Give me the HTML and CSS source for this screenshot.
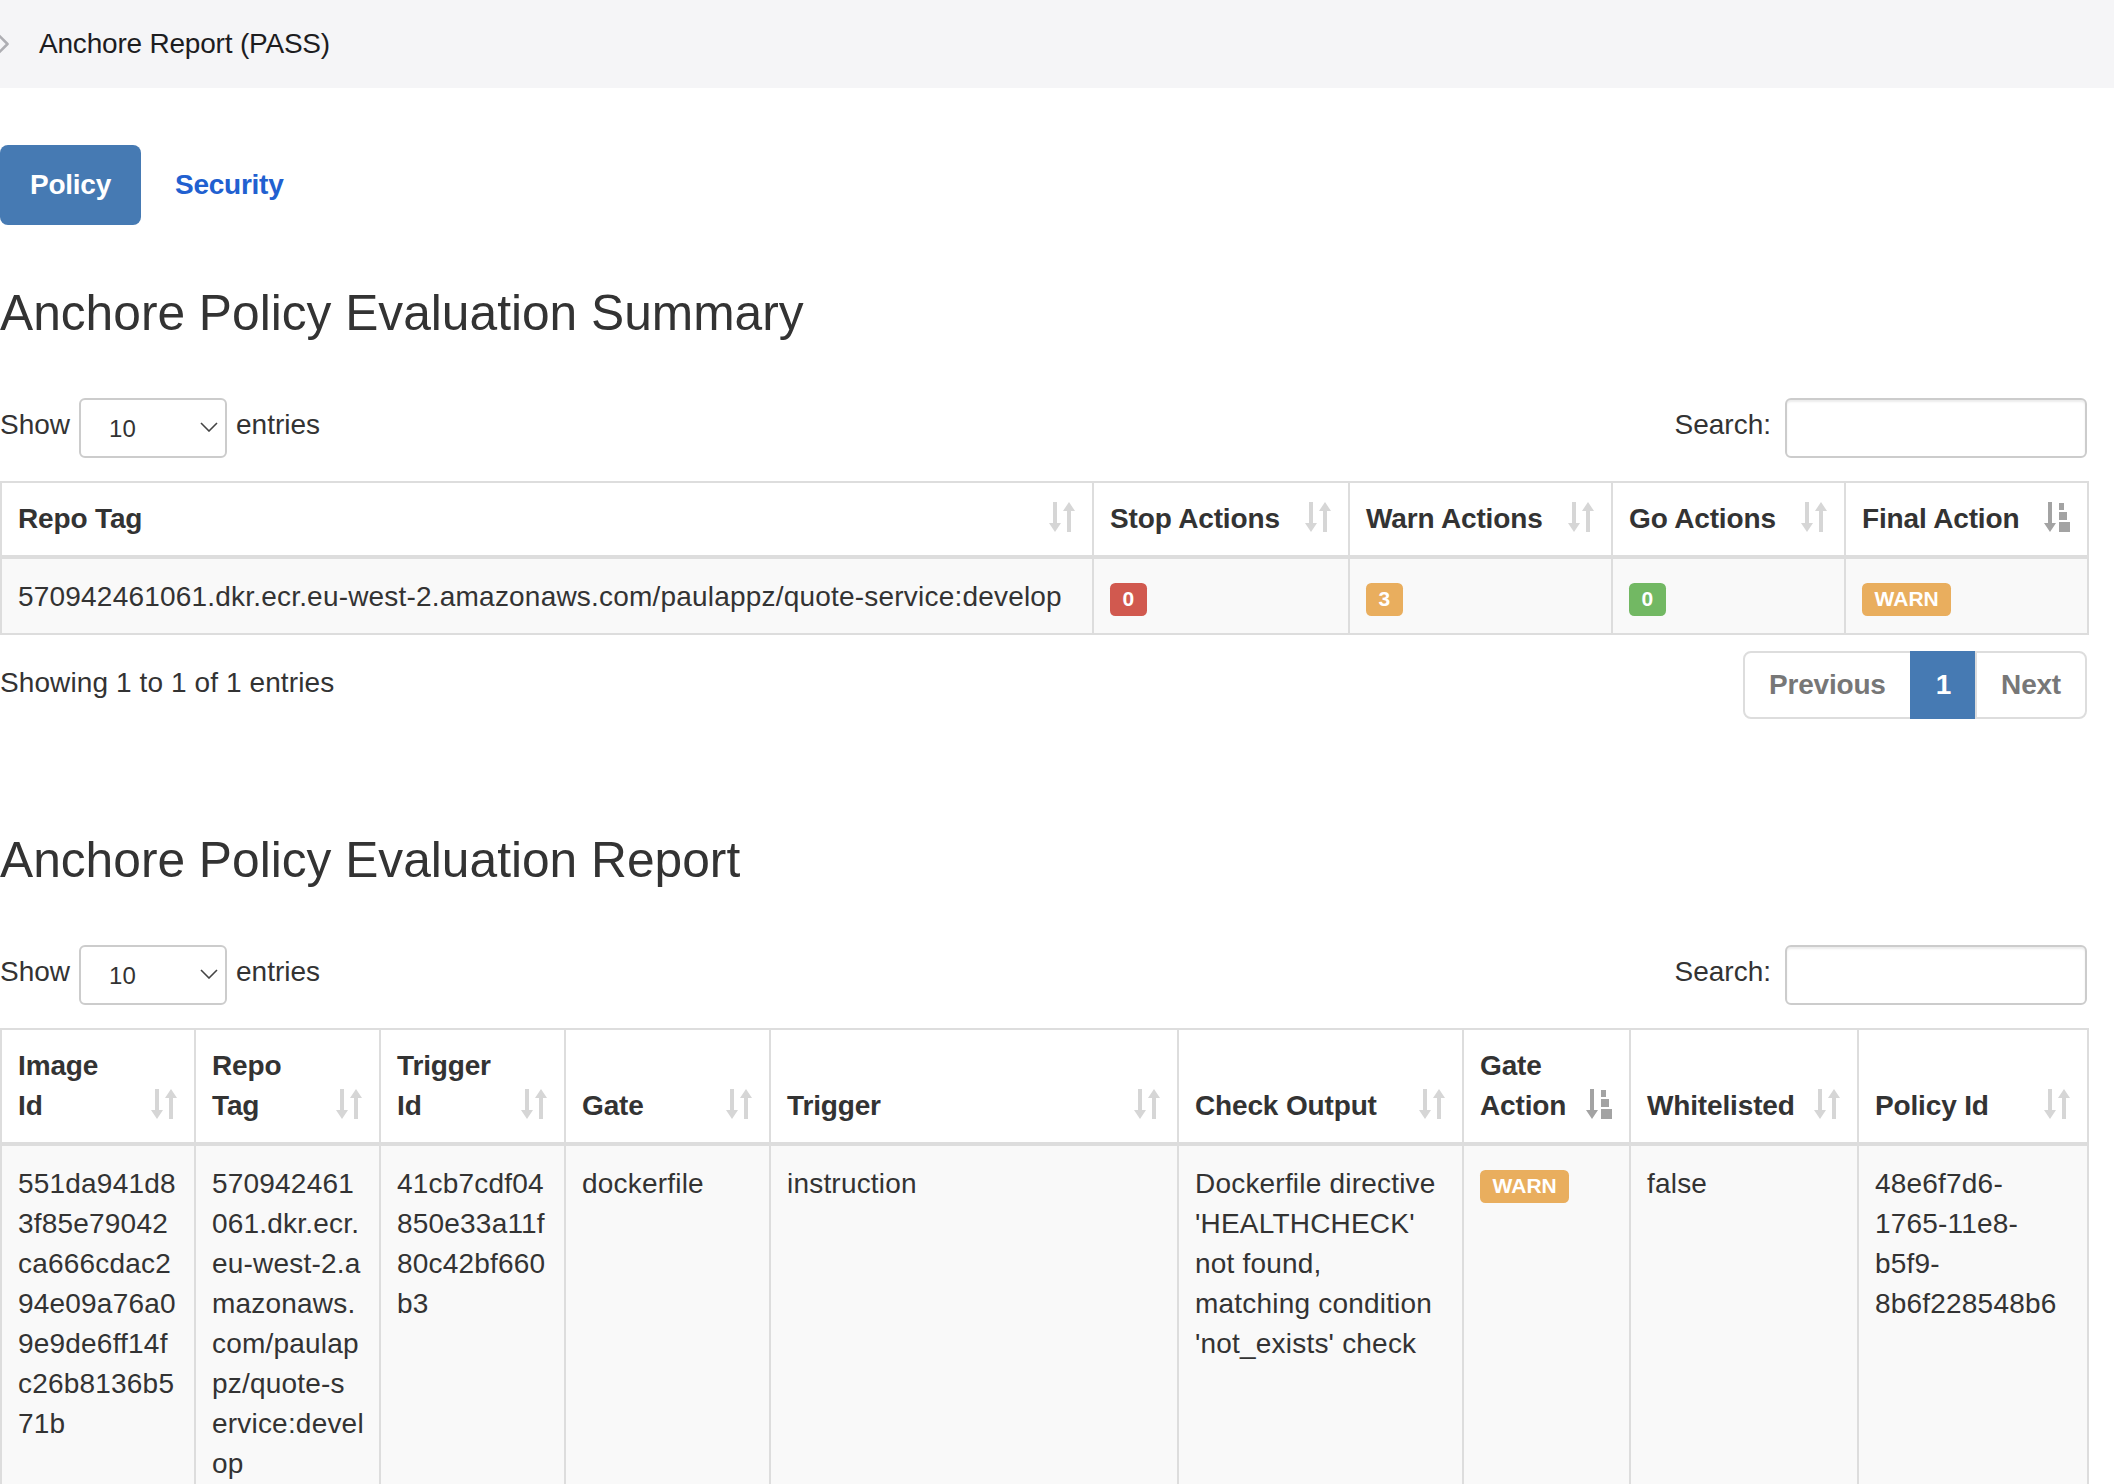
FILE: index.html
```html
<!DOCTYPE html>
<html lang="en">
<head>
<meta charset="utf-8">
<title>Anchore Report (PASS)</title>
<link rel="stylesheet" href="styles.css">
</head>
<body>
<svg class="defs" width="0" height="0" aria-hidden="true">
  <symbol id="ico-sort" viewBox="0 0 26 30">
    <path d="M4 0h4v21h4l-6 9-6-9h4z"/>
    <path d="M18 30h4V9h4l-6-9-6 9h4z"/>
  </symbol>
  <symbol id="ico-sorted" viewBox="0 0 26 30">
    <path class="arrow" d="M4 0h4v21h4l-6 9-6-9h4z"/>
    <rect x="15" y="1" width="5" height="7"/>
    <rect x="15" y="10" width="8" height="8"/>
    <rect x="15" y="20" width="11" height="10"/>
  </symbol>
  <symbol id="ico-chev" viewBox="0 0 18 10">
    <polyline points="1,1 9,9 17,1" fill="none" stroke="#444" stroke-width="1.6"/>
  </symbol>
</svg>

<div class="topbar">
  <svg class="disclosure" viewBox="0 0 12 20"><polyline points="1,1.5 9.5,10 1,18.5" fill="none" stroke="#aeaeb3" stroke-width="2.6" stroke-linecap="round" stroke-linejoin="round"/></svg>
  <span class="topbar-title">Anchore Report (PASS)</span>
</div>

<main class="page">
  <ul class="tabs">
    <li class="tab tab-active">Policy</li>
    <li class="tab">Security</li>
  </ul>

  <section class="report">
    <h3 class="report-title">Anchore Policy Evaluation Summary</h3>
    <div class="dt-toolbar">
      <div class="dt-length">
        <span class="dt-text">Show</span>
        <span class="select">10<svg class="select-chev"><use href="#ico-chev"/></svg></span>
        <span class="dt-text">entries</span>
      </div>
      <div class="dt-filter">
        <span class="dt-text">Search:</span>
        <span class="search-input"></span>
      </div>
    </div>

    <table class="dt-table">
      <colgroup>
        <col class="w-1092"><col class="w-256"><col class="w-263"><col class="w-233"><col class="w-243">
      </colgroup>
      <thead>
        <tr>
          <th>Repo Tag<svg class="sort-icon"><use href="#ico-sort"/></svg></th>
          <th>Stop Actions<svg class="sort-icon"><use href="#ico-sort"/></svg></th>
          <th>Warn Actions<svg class="sort-icon"><use href="#ico-sort"/></svg></th>
          <th>Go Actions<svg class="sort-icon"><use href="#ico-sort"/></svg></th>
          <th>Final Action<svg class="sort-icon sorted"><use href="#ico-sorted"/></svg></th>
        </tr>
      </thead>
      <tbody>
        <tr class="row-odd">
          <td>570942461061.dkr.ecr.eu-west-2.amazonaws.com/paulappz/quote-service:develop</td>
          <td><span class="badge badge-danger">0</span></td>
          <td><span class="badge badge-warning">3</span></td>
          <td><span class="badge badge-success">0</span></td>
          <td><span class="badge badge-warning">WARN</span></td>
        </tr>
      </tbody>
    </table>

    <div class="dt-footer">
      <div class="dt-info">Showing 1 to 1 of 1 entries</div>
      <ul class="pager">
        <li class="page-item page-first">Previous</li>
        <li class="page-item page-active">1</li>
        <li class="page-item page-last">Next</li>
      </ul>
    </div>
  </section>

  <section class="report report-next">
    <h3 class="report-title">Anchore Policy Evaluation Report</h3>
    <div class="dt-toolbar">
      <div class="dt-length">
        <span class="dt-text">Show</span>
        <span class="select">10<svg class="select-chev"><use href="#ico-chev"/></svg></span>
        <span class="dt-text">entries</span>
      </div>
      <div class="dt-filter">
        <span class="dt-text">Search:</span>
        <span class="search-input"></span>
      </div>
    </div>

    <table class="dt-table">
      <colgroup>
        <col class="w-194"><col class="w-185"><col class="w-185"><col class="w-205"><col class="w-408"><col class="w-285"><col class="w-167"><col class="w-228"><col class="w-230">
      </colgroup>
      <thead>
        <tr>
          <th>Image<br>Id<svg class="sort-icon"><use href="#ico-sort"/></svg></th>
          <th>Repo<br>Tag<svg class="sort-icon"><use href="#ico-sort"/></svg></th>
          <th>Trigger<br>Id<svg class="sort-icon"><use href="#ico-sort"/></svg></th>
          <th>Gate<svg class="sort-icon"><use href="#ico-sort"/></svg></th>
          <th>Trigger<svg class="sort-icon"><use href="#ico-sort"/></svg></th>
          <th>Check Output<svg class="sort-icon"><use href="#ico-sort"/></svg></th>
          <th>Gate<br>Action<svg class="sort-icon sorted"><use href="#ico-sorted"/></svg></th>
          <th>Whitelisted<svg class="sort-icon"><use href="#ico-sort"/></svg></th>
          <th>Policy Id<svg class="sort-icon"><use href="#ico-sort"/></svg></th>
        </tr>
      </thead>
      <tbody>
        <tr class="row-odd">
          <td>551da941d8<br>3f85e79042<br>ca666cdac2<br>94e09a76a0<br>9e9de6ff14f<br>c26b8136b5<br>71b</td>
          <td>570942461<br>061.dkr.ecr.<br>eu-west-2.a<br>mazonaws.<br>com/paulap<br>pz/quote-s<br>ervice:devel<br>op</td>
          <td>41cb7cdf04<br>850e33a11f<br>80c42bf660<br>b3</td>
          <td>dockerfile</td>
          <td>instruction</td>
          <td>Dockerfile directive<br>'HEALTHCHECK'<br>not found,<br>matching condition<br>'not_exists' check</td>
          <td><span class="badge badge-warning">WARN</span></td>
          <td>false</td>
          <td>48e6f7d6-<br>1765-11e8-<br>b5f9-<br>8b6f228548b6</td>
        </tr>
      </tbody>
    </table>
  </section>
</main>
</body>
</html>
```

FILE: styles.css
```css
* {
  box-sizing: border-box;
}

html,
body {
  margin: 0;
  padding: 0;
  background: #fff;
  overflow: hidden;
}

body {
  font-family: "Liberation Sans", Arial, Helvetica, sans-serif;
  font-size: 28px;
  line-height: 40px;
  color: #333;
  width: 2114px;
}

.defs {
  position: absolute;
  width: 0;
  height: 0;
  overflow: hidden;
}

/* top disclosure bar */
.topbar {
  height: 88px;
  background: #f5f5f7;
  display: flex;
  align-items: center;
}

.disclosure {
  width: 12px;
  height: 20px;
  margin-left: -2px;
  flex: none;
}

.topbar-title {
  margin-left: 29px;
  color: #1d1d1f;
  letter-spacing: -0.2px;
}

/* page */
.page {
  width: 2087px;
  padding-top: 57px;
}

.tabs {
  list-style: none;
  margin: 0;
  padding: 0;
  display: flex;
  gap: 4px;
}

.tab {
  padding: 20px 30px;
  border-radius: 8px;
  font-weight: bold;
  color: #2160d0;
  letter-spacing: -0.25px;
}

.tab-active {
  background: #467ab3;
  color: #fff;
}

.report-next {
  padding-top: 49px;
}

.report-title {
  font-size: 49.7px;
  line-height: 54px;
  font-weight: normal;
  color: #333;
  margin: 61px 0 58px;
}

/* datatables toolbar */
.dt-toolbar {
  display: flex;
  justify-content: space-between;
  align-items: center;
  height: 60px;
}

.dt-length,
.dt-filter {
  display: flex;
  align-items: center;
}

.dt-text {
  margin-bottom: 6px;
}

.select {
  width: 148px;
  height: 60px;
  margin: 0 9px;
  border: 2px solid #ccc;
  border-radius: 6px;
  background: #fff;
  display: flex;
  align-items: center;
  padding: 2px 7px 0 28px;
  font-size: 24px;
  line-height: 28px;
  color: #333;
}

.select-chev {
  width: 18px;
  height: 10px;
  margin-left: auto;
  margin-bottom: 4px;
}

.search-input {
  width: 302px;
  height: 60px;
  margin-left: 14px;
  border: 2px solid #ccc;
  border-radius: 6px;
  background: #fff;
  box-shadow: inset 0 2px 2px rgba(0, 0, 0, 0.075);
}

/* tables */
.dt-table {
  width: 2087px;
  margin-top: 23px;
  border-collapse: collapse;
  table-layout: fixed;
  border: 2px solid #ddd;
}

.w-1092 { width: 1092px; }
.w-256 { width: 256px; }
.w-263 { width: 263px; }
.w-233 { width: 233px; }
.w-243 { width: 243px; }
.w-194 { width: 194px; }
.w-185 { width: 185px; }
.w-205 { width: 205px; }
.w-408 { width: 408px; }
.w-285 { width: 285px; }
.w-167 { width: 167px; }
.w-228 { width: 228px; }
.w-230 { width: 230px; }

.dt-table th,
.dt-table td {
  border: 2px solid #ddd;
  padding: 16px;
  text-align: left;
  vertical-align: top;
  white-space: nowrap;
}

.dt-table td {
  padding-top: 18px;
  letter-spacing: 0.2px;
}

.dt-table th {
  position: relative;
  vertical-align: bottom;
  padding-right: 60px;
  border-bottom-width: 4px;
  font-weight: bold;
  background: #fff;
  letter-spacing: -0.15px;
}

.row-odd {
  background: #f9f9f9;
}

.sort-icon {
  position: absolute;
  right: 17px;
  bottom: 23px;
  width: 26px;
  height: 30px;
  fill: #d6d6d6;
}

.sort-icon.sorted {
  fill: #a3a3a3;
}

.sort-icon.sorted .arrow {
  fill: #8a8a8a;
}

/* labels */
.badge {
  display: inline;
  font-size: 21px;
  font-weight: bold;
  line-height: 1;
  padding: 4.2px 12.6px 6.3px;
  border-radius: 5.25px;
  color: #fff;
  letter-spacing: 0;
}

.badge-danger {
  background: #d1594f;
}

.badge-warning {
  background: #e9ae5e;
}

.badge-success {
  background: #72b863;
}

/* footer */
.dt-footer {
  display: flex;
  justify-content: space-between;
  align-items: flex-start;
  margin-top: 12px;
}

.dt-info {
  padding-top: 16px;
  letter-spacing: 0.1px;
}

.pager {
  list-style: none;
  display: flex;
  margin: 4px 0;
  padding: 0;
}

.page-item {
  padding: 12px 24px;
  border: 2px solid #ddd;
  margin-left: -2px;
  font-weight: bold;
  color: #777;
  background: #fff;
  letter-spacing: -0.2px;
}

.page-first {
  margin-left: 0;
  border-radius: 8px 0 0 8px;
}

.page-last {
  border-radius: 0 8px 8px 0;
}

.page-active {
  background: #467ab3;
  border-color: #467ab3;
  color: #fff;
}
```
